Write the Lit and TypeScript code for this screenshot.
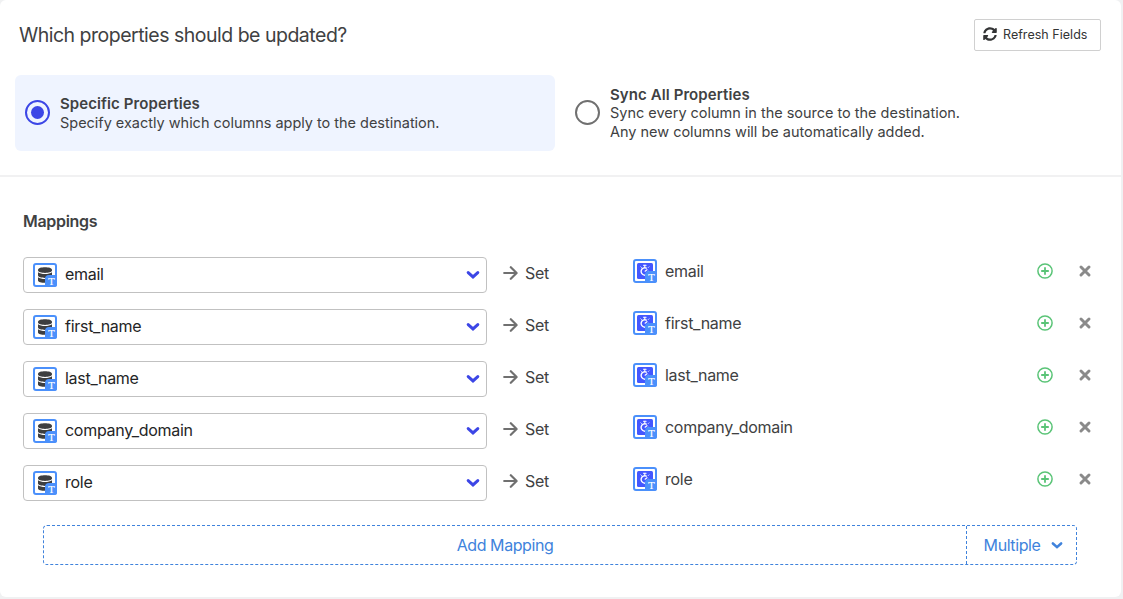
import { LitElement, html, svg, css } from "lit";
import { customElement, property, state } from "lit/decorators.js";

const chevron = svg`<path d="M2.2 2.6 L7 6.9 L11.8 2.6" fill="none" stroke="currentColor" stroke-width="3" stroke-linecap="round" stroke-linejoin="miter"/>`;

@customElement("field-icon")
export class FieldIcon extends LitElement {
  @property() kind = "source";
  static styles = css`
    :host { display: block; width: 24px; height: 24px; flex: none; }
    svg { display: block; }
    text { font: 400 9.5px "DejaVu Serif", serif; fill: #fff; stroke: #fff; stroke-width: 0.2px; }
  `;
  render() {
    const source = svg`
      <g fill="#3d3e40">
        <path d="M5 6.6 C5 3.3 19 3.3 19 6.6 V7.6 C19 10.8 5 10.8 5 7.6 Z"/>
        <path d="M5 9.2 C8 11.6 16 11.6 19 9.2 V12.6 C19 15.8 5 15.8 5 12.6 Z"/>
        <path d="M5 14.2 C8 16.6 16 16.6 19 14.2 V17.4 C19 20.6 5 20.6 5 17.4 Z"/>
      </g>`;
    const target = svg`
      <rect x="4" y="4" width="16" height="16" rx="1.5" fill="#4457ff"/>
      <g fill="none" stroke="#fff" stroke-linecap="round">
        <path d="M13.300 9.100 A3.700 3.700 0 1 0 15.500 12.500" stroke-width="1.400"/>
        <path d="M10.500 6.300 H13.100 M11.800 6.500 V8.300 M12.100 12.200 L14 10.700" stroke-width="1.100"/>
        <path d="M7.900 7.900 L8.400 8.400 M15.400 8.400 L15.900 7.900" stroke-width="1"/>
      </g>`;
    return html`<svg width="24" height="24" viewBox="0 0 24 24">
      <rect x="1" y="1" width="22" height="22" rx="2" fill="#fff" stroke="#4b90fb" stroke-width="2"/>
      ${this.kind === "source" ? source : target}
      <path d="M12 24 V16 Q12 12 16 12 H24 V21.5 Q24 24 21.5 24 Z" fill="#4b90fb"/>
      <text x="18.3" y="21.8" text-anchor="middle">T</text>
    </svg>`;
  }
}

@customElement("mapping-row")
export class MappingRow extends LitElement {
  @property() name = "";
  static styles = css`
    :host { display: grid; grid-template-columns: 464px 146px 404px 56px; height: 52px; align-items: start; }
    .select { box-sizing: border-box; height: 36px; border: 1px solid #c1c1c1; border-radius: 4px; display: flex; align-items: center; gap: 8px; padding: 0 6px 2px 9px; color: #242526; }
    .select field-icon { margin-top: 2px; }
    .select svg { margin: 2px 0 0 auto; color: #3c46e6; }
    .name { letter-spacing: -0.28px; }
    .set { display: flex; align-items: center; gap: 7px; padding-left: 16px; height: 32px; }
    .target { display: flex; align-items: center; gap: 8px; height: 28px; }
    .actions { display: flex; gap: 24px; }
    .action { display: flex; height: 28px; align-items: center; }
    svg { display: block; flex: none; }
  `;
  render() {
    return html`
      <div class="select"><field-icon kind="source"></field-icon><span class="name">${this.name}</span>
        <svg width="14" height="10" viewBox="0 0 14 10">${chevron}</svg>
      </div>
      <div class="set">
        <svg width="15" height="14" viewBox="0 0 15 14" fill="none" stroke="#707070" stroke-width="2.2" stroke-linecap="round" stroke-linejoin="round"><path d="M1.200 7 H13.200 M7.800 1.200 L13.600 7 L7.800 12.800"/></svg>
        <span class="name">Set</span>
      </div>
      <div class="target"><field-icon kind="target"></field-icon><span class="name">${this.name}</span></div>
      <div class="actions">
        <span class="action"><svg width="16" height="16" viewBox="0 0 16 16" fill="none" stroke="#5ac477"><circle cx="8" cy="8" r="7.1" stroke-width="1.5"/><path d="M8 4.2 V11.8 M4.2 8 H11.8" stroke-width="1.8"/></svg></span>
        <span class="action"><svg width="16" height="16" viewBox="0 0 16 16" fill="none" stroke="#8a8a8a" stroke-width="3" stroke-linecap="round"><path d="M4 4 L12 12 M12 4 L4 12"/></svg></span>
      </div>`;
  }
}

@customElement("app-root")
export class AppRoot extends LitElement {
  @state() fields = ["email", "first_name", "last_name", "company_domain", "role"];
  static styles = css`
    :host { display: block; height: 599px; box-sizing: border-box; padding: 0 2px 2px 0; background: #f0f1f2; overflow: hidden; font: 16px/20px Inter, "Liberation Sans", sans-serif; color: #404142; }
    .card { height: 597px; background: #fff; border-radius: 6px; overflow: hidden; box-sizing: border-box; }
    .top { height: 175px; border-bottom: 2px solid #f1f1f2; }
    .head { display: flex; justify-content: space-between; align-items: flex-start; padding: 19px 20px 0 19px; height: 56px; }
    h1 { margin: 2px 0 0; font-size: 19.5px; line-height: 28px; font-weight: 400; letter-spacing: -0.5px; }
    .refresh { box-sizing: border-box; width: 127px; height: 32px; border: 1px solid #d0d0d0; border-radius: 2px; display: flex; align-items: center; padding: 0 0 0 8px; gap: 6px; font-size: 12.5px; color: #333435; letter-spacing: 0.03px; white-space: nowrap; }
    .refresh svg { margin-bottom: 2px; }
    .options { display: grid; grid-template-columns: 540px 540px; gap: 10px; padding-left: 15px; }
    .option { height: 76px; border-radius: 6px; display: flex; align-items: center; gap: 10px; padding-left: 10px; font-size: 15px; line-height: 19px; }
    .option.on { background: #eff4ff; }
    .radio { box-sizing: border-box; width: 25px; height: 25px; margin-bottom: 1px; border: 2px solid #707070; border-radius: 50%; flex: none; display: grid; place-items: center; }
    .on .radio { border-color: #3c46e6; }
    .on .radio::after { content: ""; width: 13px; height: 13px; border-radius: 50%; background: #3c46e6; }
    .label { font-weight: 600; letter-spacing: 0.09px; white-space: nowrap; }
    .desc { font-size: 14.5px; letter-spacing: -0.02px; white-space: nowrap; }
    .option:not(.on) .desc { margin: -1px 0 1px; }
    .body { padding: 34px 28px 0 23px; }
    h2 { margin: 0 0 26px; font-size: 16px; line-height: 20px; font-weight: 600; letter-spacing: -0.3px; }
    .add { box-sizing: border-box; margin: 8px 16px 0 20px; height: 40px; display: grid; grid-template-columns: 1fr 110px; border: 1px dashed #4083dc; border-radius: 4px; color: #4083dc; letter-spacing: -0.42px; }
    .add > div { display: flex; align-items: center; justify-content: center; }
    .add .multi { border-left: 1px dashed #4083dc; gap: 11px; padding-left: 4px; }
  `;
  render() {
    return html`<div class="card">
      <section class="top">
        <div class="head">
          <h1>Which properties should be updated?</h1>
          <div class="refresh">
            <svg width="14" height="14" viewBox="0 0 512 512" fill="currentColor"><path d="M370.7 133.3C339.5 104 298.9 88 255.8 88c-77.500 .1-144.300 53.200-162.800 126.900-1.300 5.400-6.100 9.100-11.700 9.100H24.100c-7.500 0-13.200-6.800-11.800-14.200C33.900 94.900 134.800 8 256 8c66.400 0 126.800 26.100 171.300 68.700L463 41C478.100 25.900 504 36.600 504 57.900V192c0 13.300-10.700 24-24 24H345.900c-21.400 0-32.100-25.900-17-41l41.800-41.700zM32 296h134.100c21.400 0 32.100 25.900 17 41l-41.800 41.800c31.300 29.300 71.800 45.300 114.900 45.300 77.400-.1 144.300-53.100 162.800-126.900 1.300-5.400 6.100-9.100 11.700-9.100h57.300c7.500 0 13.200 6.800 11.800 14.200C478.100 417.100 377.200 504 256 504c-66.400 0-126.800-26.100-171.300-68.700L49 471C33.900 486.100 8 475.400 8 454.100V320c0-13.300 10.700-24 24-24z"/></svg>
            <span>Refresh Fields</span>
          </div>
        </div>
        <div class="options">
          <div class="option on"><span class="radio"></span>
            <div><div class="label">Specific Properties</div><div class="desc">Specify exactly which columns apply to the destination.</div></div>
          </div>
          <div class="option"><span class="radio"></span>
            <div><div class="label">Sync All Properties</div><div class="desc">Sync every column in the source to the destination.<br>Any new columns will be automatically added.</div></div>
          </div>
        </div>
      </section>
      <section class="body">
        <h2>Mappings</h2>
        ${this.fields.map((f) => html`<mapping-row name=${f}></mapping-row>`)}
        <div class="add">
          <div>Add Mapping</div>
          <div class="multi"><span>Multiple</span><svg width="12" height="9" viewBox="0 0 14 10">${chevron}</svg></div>
        </div>
      </section>
    </div>`;
  }
}
